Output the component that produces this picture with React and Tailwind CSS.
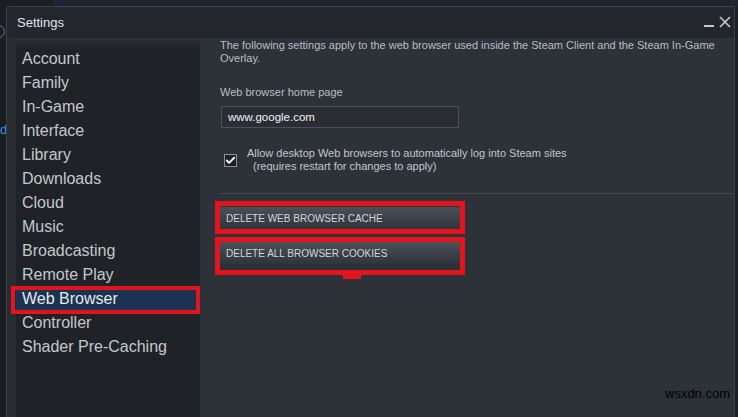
import { Check } from 'lucide-react';

const sections = [
  'Account',
  'Family',
  'In-Game',
  'Interface',
  'Library',
  'Downloads',
  'Cloud',
  'Music',
  'Broadcasting',
  'Remote Play',
  'Web Browser',
  'Controller',
  'Shader Pre-Caching',
];

function NavItem({ label, active }) {
  if (!active) {
    return (
      <div className="h-[24px] flex items-center pl-[6px] text-[16px] text-[#c3c8cd]">
        {label}
      </div>
    );
  }
  return (
    <div className="relative h-[24px] flex items-center pl-[6px] text-[16px] text-[#e6eaee] bg-[#1b3350]">
      {label}
      <div className="absolute -left-[5px] -top-[1px] right-0 -bottom-[3px] border-[4px] border-[#e3141d]" />
    </div>
  );
}

function ActionButton({ label, box, tab }) {
  return (
    <div className="relative w-[241px] ml-[-1px]">
      <button className="w-full h-[22px] flex items-center pl-[7px] text-[10px] text-[#d2d6da] bg-gradient-to-b from-[#4b5059] to-[#30343b] rounded-[2px]">
        {label}
      </button>
      <div className={`absolute -left-[4px] -right-[5px] border-[5px] border-[#e3141d] ${box}`} />
      {tab && <div className="absolute left-[124px] -bottom-[15px] w-[18px] h-[5px] bg-[#e3141d]" />}
    </div>
  );
}

export default function App() {
  return (
    <div
      className="relative w-[738px] h-[417px] overflow-hidden bg-[#1b1e23]"
      style={{ fontFamily: '"Liberation Sans", Arial, sans-serif' }}
    >
      {/* window behind the dialog */}
      <div className="absolute left-[53px] top-0 right-0 h-[7px] bg-[#1f2531]" />
      <div className="absolute left-[-8px] top-[25px] w-[13px] h-[13px] rounded-full border border-[#6b7078]" />
      <div className="absolute left-0 top-[122px] text-[13px] leading-[16px] text-[#3f8ed8]">d</div>

      {/* settings dialog */}
      <div className="absolute left-[6px] top-[6px] w-[729px] h-[420px] flex flex-col bg-[#23262c] border border-[#3b4049] rounded-tl-[3px]">
        <div className="h-[31px] flex items-center pl-[10px] pr-[3px]">
          <span className="text-[13px] text-[#e2e5e8]">Settings</span>
          <div className="ml-auto flex items-end gap-[5px]">
            <div className="w-[10px] h-[2px] bg-[#c4c8cc] mb-[3px]" />
            <svg width="12" height="12" viewBox="0 0 12 12" className="mb-[2px]">
              <path d="M1 1 L11 11 M11 1 L1 11" stroke="#c4c8cc" strokeWidth="1.6" />
            </svg>
          </div>
        </div>

        <div className="flex flex-1">
          <div className="w-[9px] bg-[#292c31]" />

          <nav className="w-[184px] pt-[9px] bg-[linear-gradient(to_bottom,#2c3037_0px,#1f2227_12px)]">
            {sections.map((s) => (
              <NavItem key={s} label={s} active={s === 'Web Browser'} />
            ))}
          </nav>

          <section className="flex-1 flex flex-col bg-[#2d3138] pl-[20px] pr-[1px] pt-[1px] text-[11px] leading-[13px] text-[#b9bec3]">
            <p className="pr-[14px]">
              The following settings apply to the web browser used inside the Steam Client and the Steam In-Game
              Overlay.
            </p>

            <div className="mt-[21px]">Web browser home page</div>
            <div className="mt-[7px] ml-[1px] w-[238px] h-[22px] flex items-center pl-[6px] bg-[#2a2d33] border border-[#4c5159] text-[11.5px] text-[#f0f2f4]">
              www.google.com
            </div>

            <label className="mt-[19px] ml-[4px] flex items-center gap-[10px]">
              <span className="w-[13px] h-[13px] flex items-center justify-center bg-[#1e2024] border border-[#8c9198]">
                <Check size={11} strokeWidth={4} color="#ffffff" />
              </span>
              <span className="text-[#c3c7cb]">
                Allow desktop Web browsers to automatically log into Steam sites
                <br />
                <span className="pl-[6px]">(requires restart for changes to apply)</span>
              </span>
            </label>

            <div className="mt-[20px] h-px bg-[#454a52]" />

            <div className="mt-[13px]">
              <ActionButton label="DELETE WEB BROWSER CACHE" box="-top-[6px] -bottom-[5px]" />
            </div>
            <div className="mt-[13px]">
              <ActionButton label="DELETE ALL BROWSER COOKIES" box="-top-[5px] -bottom-[11px]" tab />
            </div>

            <span className="mt-[123px] ml-[445px] text-[13px] text-black">wsxdn.com</span>
          </section>
        </div>
      </div>
    </div>
  );
}
